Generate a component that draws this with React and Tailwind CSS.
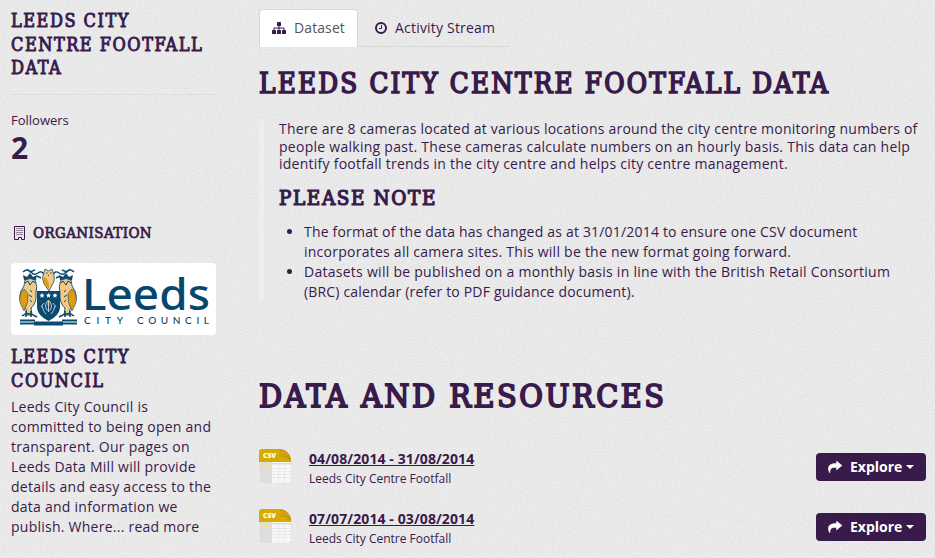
import React from "react";

const slab = "font-['DejaVu_Serif_Condensed','DejaVu_Serif',serif] font-stretch-condensed font-normal uppercase whitespace-nowrap";

function Owl() {
  return (
    <g>
      <path d="M6 14 L5 9 L9 11 L12 7 L15 11 L19 9 L18 14 Z" fill="#0b4a70" />
      <path d="M7 14 Q12 11 17 14 Q20 20 18 27 Q19 37 13 42 L14 49 L9 49 L8 43 Q-1 35 3 25 Q7 20 7 14Z" fill="#f0c987" stroke="#0b4a70" strokeWidth=".9" />
      <path d="M6 23 Q-1 30 3 39 L6 45 Q11 36 10 28Z" fill="#e09a16" stroke="#0b4a70" strokeWidth=".6" />
      <path d="M7 17 L10 15 L12 19 L15 15 L17 17 M12 24 l2 2 M11 29 l3 2 M12 34 l2 2" fill="none" stroke="#0b4a70" strokeWidth="1" />
      <path d="M4 50 Q10 45 19 51 M8 45 v6 M13 45 v6" fill="none" stroke="#0b4a70" strokeWidth="1.6" />
    </g>
  );
}

function CouncilLogo() {
  return (
    <svg width="205" height="72" viewBox="0 0 205 72" className="block rounded bg-white">
      <g transform="translate(7 3)"><Owl /></g>
      <g transform="translate(67 3) scale(-1 1)"><Owl /></g>
      <path d="M12 9 q4 -4 8 0 q3 4 7 1 q4 -3 6 2 M63 9 q-4 -4 -8 0 q-3 4 -7 1 q-4 -3 -6 2 M16 6 l3 3 l5 -2 M59 6 l-3 3 l-5 -2 M26 13 l4 2 M49 13 l-4 2" fill="none" stroke="#0b4a70" strokeWidth="1.4" />
      <path d="M33 9 l1 -3 l3.500 2 l3.500 -2 l1 3 q3 8 -1 13 l-3 6 l-5 -7 q-3 -6 0 -12Z" fill="#f0c987" stroke="#0b4a70" strokeWidth=".8" />
      <path d="M34 14 q-3 5 1 9 l3 3 q1 -8 -4 -12Z" fill="#e09a16" />
      <path d="M35 10 h1.500 M39 10 h1.500 M37 12 l1 1" stroke="#0b4a70" strokeWidth="1" />
      <path d="M26 28 H49 V45 Q48 53 37.500 58 Q27 53 26 45Z" fill="#0b4a70" />
      <path d="M31 30 l.8 1.600 1.700 .2 -1.300 1.200 .4 1.700 -1.600 -.9 -1.600 .9 .4 -1.700 -1.300 -1.200 1.700 -.2Z M37.500 30 l.8 1.600 1.700 .2 -1.300 1.200 .4 1.700 -1.600 -.9 -1.600 .9 .4 -1.700 -1.300 -1.200 1.700 -.2Z M44 30 l.8 1.600 1.700 .2 -1.300 1.200 .4 1.700 -1.600 -.9 -1.600 .9 .4 -1.700 -1.300 -1.200 1.700 -.2Z" fill="#fff" />
      <path d="M37.500 37 q-3 3 -3 6 q0 4 3 5 q3 -1 3 -5 q0 -3 -3 -6Z M31 43 q1 5 4 8 M44 43 q-1 5 -4 8 M33 40 l-3 4 M42 40 l3 4 M37.500 41 v8" fill="none" stroke="#b9ccd8" strokeWidth="1" />
      <path d="M37.500 38 v5" stroke="#f0c987" strokeWidth="1.500" />
      <path d="M9 57.500 H24 M51 57.500 H66 M9 60.500 H24 M51 60.500 H66" stroke="#0b4a70" strokeWidth="1.800" />
      <path d="M23 58.500 H52 V62.500 H23Z" fill="#0b4a70" />
      <text x="71" y="47" textLength="128" lengthAdjust="spacingAndGlyphs" fill="#07466d" className="font-['Noto_Sans',sans-serif] text-[43px] font-medium">Leeds</text>
      <text x="73" y="61" textLength="39" fill="#07466d" className="font-['Lato',sans-serif] text-[10px] font-medium">CITY</text>
      <text x="126" y="61" textLength="72" fill="#07466d" className="font-['Lato',sans-serif] text-[10px] font-medium">COUNCIL</text>
    </svg>
  );
}

function BuildingIcon() {
  return (
    <svg width="12" height="14" viewBox="0 0 12 14" className="block">
      <path d="M.5 .5 H10.500 V13.500 H7.500 V11.500 H4.500 V13.500 H.5Z" fill="none" stroke="#381a4b" />
      <path d="M2.500 2.500 H9 M2.500 4.500 H9 M2.500 6.500 H9 M2.500 8.500 H9" stroke="#381a4b" strokeDasharray="1 1" />
    </svg>
  );
}

function SitemapIcon() {
  return (
    <svg width="14" height="12" viewBox="0 0 14 12" className="mr-2 text-[#381a4b]" fill="currentColor">
      <rect x="5" y="0" width="4" height="4" rx=".6" />
      <rect x="0" y="8" width="4" height="4" rx=".6" />
      <rect x="5" y="8" width="4" height="4" rx=".6" />
      <rect x="10" y="8" width="4" height="4" rx=".6" />
      <path d="M7 3 V9 M2 9 V6 H12 V9" fill="none" stroke="currentColor" strokeWidth="1" />
    </svg>
  );
}

function CsvIcon() {
  return (
    <svg width="33" height="34" viewBox="0 0 33 34" className="block">
      <path d="M1 12 H32 V31 Q32 34 29 34 H4 Q1 34 1 31Z" fill="#f8f8f8" stroke="#ddd" strokeWidth=".6" />
      <path d="M1 13 H13 V34 H4 Q1 34 1 31Z" fill="#dedede" />
      <path d="M1 14 H32 V15.500 H1Z" fill="#dcdcdc" />
      <path d="M1 16 H13 V18.500 H1Z" fill="#f8dda0" />
      <path d="M13 19.500 H32 M13 22.500 H32 M13 25.500 H32 M13 28.500 H32 M19.500 14 V33 M25.500 14 V33" stroke="#e3e3e3" strokeWidth=".7" />
      <path d="M3 0 H21 L32 10 V13 H0 V3 Q0 0 3 0Z" fill="#d8ab00" />
      <path d="M20 0 Q23 2 22 8 Q27 6 32 12 Q32 6 27 2 Q24 0 20 0Z" fill="#b88e08" />
      <path d="M21 1 Q29 1 31.500 10 Q28 6 23 7Z" fill="#d0a01a" />
      <text x="4" y="9" textLength="13" lengthAdjust="spacingAndGlyphs" fill="#fff" className="font-['Open_Sans',sans-serif] text-[7.5px] font-extrabold">CSV</text>
    </svg>
  );
}

function Resource({ title }) {
  return (
    <div className="flex h-[60px]">
      <div className="w-[50px] shrink-0"><CsvIcon /></div>
      <div className="flex-1 whitespace-nowrap">
        <a className="block text-[14px] leading-5 font-bold tracking-[0.1px] underline">{title}</a>
        <p className="text-[12px] leading-5">Leeds City Centre Footfall</p>
      </div>
      <button className="mt-1 flex h-7 w-[110px] items-center rounded bg-[#381a4b] pl-3 text-[14px] font-bold text-white">
        <svg width="14" height="12" viewBox="0 0 14 12" className="mr-2">
          <path d="M8.500 0 L14 4.500 L8.500 9 V6.500 C4 6.200 2 7 1.800 12 C-1.500 6 1 2.400 8.500 2.500Z" fill="#fff" stroke="#fff" strokeWidth=".5" />
        </svg>
        <span>Explore</span>
        <span className="ml-1 border-x-4 border-t-4 border-x-transparent border-t-white" />
      </button>
    </div>
  );
}

export default function App() {
  return (
    <div className="relative h-[558px] w-[935px] overflow-hidden bg-[#e6e6e6] font-['Open_Sans',sans-serif] text-[14px] leading-5 text-[#381a4b]">
      <svg width="935" height="558" className="absolute inset-0">
        <filter id="paper">
          <feTurbulence type="fractalNoise" baseFrequency=".5" numOctaves="2" seed="4" stitchTiles="stitch" />
          <feColorMatrix values="0 0 0 0 1  0 0 0 0 1  0 0 0 0 1  .8 0 0 0 -.3" />
        </filter>
        <rect width="935" height="558" filter="url(#paper)" />
      </svg>
      <div className="relative flex">
        <aside className="ml-[11px] w-[205px] shrink-0 whitespace-nowrap">
          <h1 className={`${slab} pt-[9px] text-[18px] leading-[23.6px] tracking-[1.5px] [-webkit-text-stroke:0.9px_#381a4b]`}>Leeds City<br />Centre Footfall<br />Data</h1>
          <div className="mt-[14px] border-t border-dotted border-[#d2d2d2]" />
          <p className="mt-[15px] text-[13px]">Followers</p>
          <p className="mt-[3px] text-[30px] leading-[30px] font-bold">2</p>
          <h2 className={`${slab} mt-[60px] flex items-center pl-[3px] text-[15px] leading-5 tracking-[0.4px] [-webkit-text-stroke:0.7px_#381a4b]`}>
            <BuildingIcon /><span className="ml-[7px]">Organisation</span>
          </h2>
          <div className="mt-[20px]"><CouncilLogo /></div>
          <h2 className={`${slab} mt-[10px] text-[18px] leading-6 tracking-[1.5px] [-webkit-text-stroke:0.9px_#381a4b]`}>Leeds City<br />Council</h2>
          <p className="mt-[4px] tracking-[0.25px]">Leeds City Council is<br />committed to being open and<br />transparent. Our pages on<br />Leeds Data Mill will provide<br />details and easy access to the<br />data and information we<br />publish. Where... read more</p>
        </aside>
        <main className="ml-[43px] w-[667px] shrink-0 whitespace-nowrap">
          <nav className="mt-[9px] flex h-[38px] w-[251px]">
            <a className="flex w-[99px] items-center rounded-t border border-b-0 border-[#d8d8d8] bg-white pb-[2px] pl-3 text-[#555] tracking-[0.1px]"><SitemapIcon />Dataset</a>
            <a className="flex w-[152px] items-center border-b border-[#d9d9d9] pl-[17px] tracking-[0.2px]">
              <svg width="12" height="12" viewBox="0 0 12 12" className="mr-2"><circle cx="6" cy="6" r="5" fill="none" stroke="#381a4b" strokeWidth="2" /><path d="M6.500 3 V6.500 H4" fill="none" stroke="#381a4b" /></svg>
              Activity Stream
            </a>
          </nav>
          <h1 className={`${slab} mt-[16px] text-[27.5px] leading-10 tracking-[2.2px] [-webkit-text-stroke:1.6px_#381a4b]`}>Leeds City Centre Footfall Data</h1>
          <section className="mt-[16px] h-[182px] border-l-[5px] border-[#eeeeee] pl-[15px]">
            <p className="pt-px leading-[17.5px] tracking-[0.25px]">
              <span className="tracking-[0.22px]">There are 8 cameras located at various locations around the city centre monitoring numbers of</span><br />
              <span className="tracking-[0.27px]">people walking past. These cameras calculate numbers on an hourly basis. This data can help</span><br />
              identify footfall trends in the city centre and helps city centre management.
            </p>
            <h3 className={`${slab} mt-[11px] text-[20.5px] leading-7 tracking-[1.6px] [-webkit-text-stroke:1.2px_#381a4b]`}>Please note</h3>
            <ul className="mt-[10px] ml-[25px] list-disc">
              <li><span className="tracking-[0.19px]">The format of the data has changed as at 31/01/2014 to ensure one CSV document</span><br /><span className="tracking-[0.25px]">incorporates all camera sites. This will be the new format going forward.</span></li>
              <li><span className="tracking-[0.27px]">Datasets will be published on a monthly basis in line with the British Retail Consortium</span><br /><span className="tracking-[0.18px]">(BRC) calendar (refer to PDF guidance document).</span></li>
            </ul>
          </section>
          <h2 className={`${slab} mt-[75px] text-[32px] leading-10 tracking-[2.5px] [-webkit-text-stroke:1.8px_#381a4b]`}>Data and Resources</h2>
          <div className="mt-[33px]">
            <Resource title="04/08/2014 - 31/08/2014" />
            <Resource title="07/07/2014 - 03/08/2014" />
          </div>
        </main>
      </div>
    </div>
  );
}
